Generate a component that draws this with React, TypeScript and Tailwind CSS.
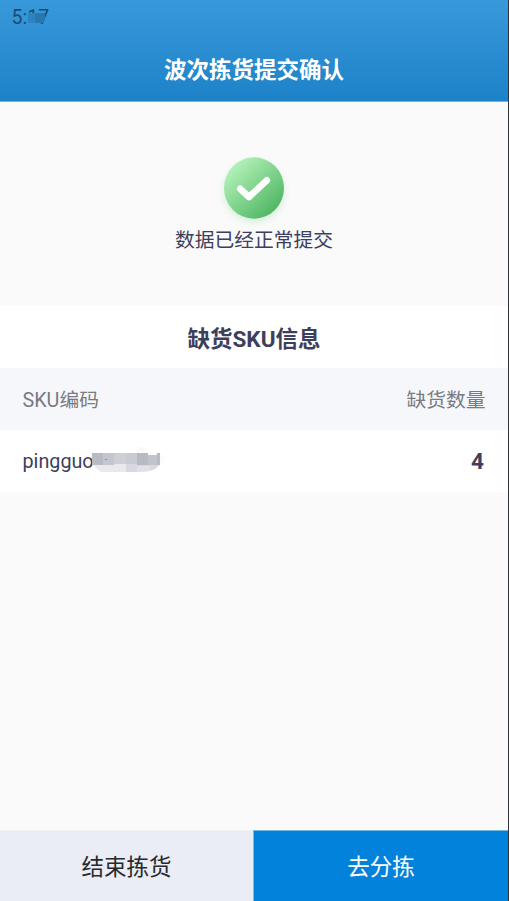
import React from "react";

const shortages = [{ sku: "pingguo", quantity: 4 }];

const StatusBar = () => (
  <div className="flex h-[34px] items-center pt-px pl-[11.5px] text-[19.5px] text-[#1b4c70]">
    <div className="relative leading-none">
      5:17
      <svg className="absolute top-[4px] left-[16px]" width="20" height="14" viewBox="0 0 20 14">
        <path fill="#3493d5" d="M0 10H12V14H0z" />
        <path fill="#2c83bd" d="M0 1H7V11H0z" />
        <path fill="#2678af" d="M7 1H17V6L15 11H7z" />
      </svg>
    </div>
  </div>
);

const SuccessIcon = () => (
  <svg width="90" height="90" viewBox="0 0 90 90" fill="none">
    <defs>
      <linearGradient id="success-fill" x1="22" y1="21" x2="67" y2="69" gradientUnits="userSpaceOnUse">
        <stop stopColor="#b7f4bd" />
        <stop offset="1" stopColor="#4eb561" />
      </linearGradient>
      <filter id="success-glow" x="0" y="0" width="90" height="90" filterUnits="userSpaceOnUse">
        <feGaussianBlur stdDeviation="4.5" />
      </filter>
    </defs>
    <circle cx="45" cy="49" r="29" fill="#69c97a" opacity="0.3" filter="url(#success-glow)" />
    <ellipse cx="45" cy="45" rx="30" ry="30.7" fill="url(#success-fill)" />
    <path
      d="M31.3 45.8L40 54L57.8 37.3"
      stroke="white"
      strokeWidth="6.6"
      strokeLinecap="round"
      strokeLinejoin="round"
    />
  </svg>
);

// Mosaic over the tail of the SKU code
const SkuMask = () => (
  <svg className="absolute top-[-2px] left-[69px]" width="74" height="26" viewBox="0 0 74 26">
    <path fill="#fbfbfc" d="M45 0H55V5H67L73 11L68 19H40z" />
    <path fill="#e9e9ed" d="M2 17H34V25H10Q5 24 2 17z" />
    <path fill="#d8d9e0" d="M34 17H67Q66 22 57 24L45 25H34z" />
    <path fill="#e0e0e6" d="M45 19H58V24L45 25z" />
    <path fill="#b9bbc4" d="M0 6H11V18H0z" />
    <path fill="#c5c6cd" d="M11 6H22V18H11z" />
    <path fill="#cecfd5" d="M22 6H34V17H22z" />
    <path fill="#cacbd2" d="M34 6H45V17H34z" />
    <path fill="#b8bac3" d="M45 6H56V8H65V6H68V18H45z" />
    <path fill="#c1c2ca" d="M56 8H65V18H56z" />
    <path fill="#8c8f9b" d="M13 12H15V13H13z" />
  </svg>
);

const App = () => {
  return (
    <div className="flex h-[901px] w-[509px] flex-col border-r border-[#303337] bg-[#fafafa] font-[Roboto,'Noto_Sans_CJK_SC',sans-serif] text-[#3d405c]">
      <header className="h-[102px] shrink-0 border-b border-[#75b2df] bg-linear-to-b from-[#3899da] to-[#1c82c8]">
        <StatusBar />
        <h1 className="flex h-[67px] items-center justify-center pt-[6px] text-[22.5px] font-bold text-white">
          波次拣货提交确认
        </h1>
      </header>

      <section className="flex h-[204px] shrink-0 flex-col items-center pt-[41px]">
        <SuccessIcon />
        <p className="-mt-[7px] text-[19.75px] leading-[30px]">数据已经正常提交</p>
      </section>

      <section className="flex-1">
        <h2 className="flex h-[62px] items-center justify-center bg-white pt-1.5 text-[22.5px] font-bold">
          缺货SKU信息
        </h2>
        <div className="flex h-[62px] items-center justify-between bg-[#f6f7fa] px-[22.5px] pt-[3px] text-[19.75px] text-[#787b82]">
          <span>SKU编码</span>
          <span>缺货数量</span>
        </div>
        {shortages.map((item) => (
          <div
            key={item.sku}
            className="flex h-[62px] items-center justify-between bg-white pt-[2px] pr-[24px] pl-[22.5px]"
          >
            <div className="relative text-[19.75px] leading-[26px]">
              {item.sku}
              <SkuMask />
            </div>
            <span className="text-[22.5px] font-bold">{item.quantity}</span>
          </div>
        ))}
      </section>

      <footer className="flex h-[71px] shrink-0 text-[22.5px]">
        <button className="w-[253px] border-t border-[#f0f2f6] bg-[#eaedf5] pt-[3px] text-[#27292b]">
          结束拣货
        </button>
        <button className="flex-1 border-t border-l border-[#75b9e5] bg-[#0282da] pt-[3px] text-white">
          去分拣
        </button>
      </footer>
    </div>
  );
};

export default App;
